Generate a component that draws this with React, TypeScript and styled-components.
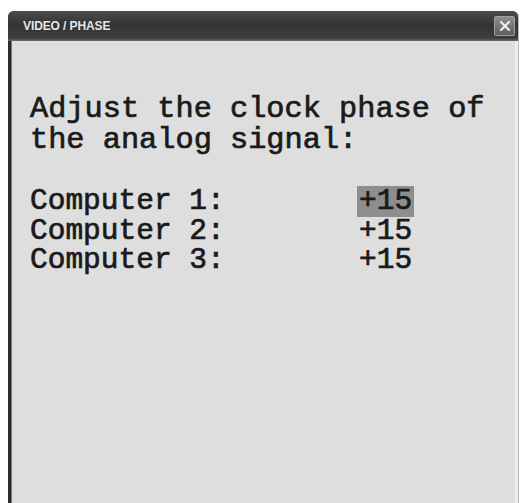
import styled, { createGlobalStyle } from "styled-components";

const GlobalStyle = createGlobalStyle`
  html, body {
    margin: 0;
    height: 100%;
    overflow: hidden;
    background: #ffffff;
  }
`;

const Window = styled.div`
  margin: 11px 2px 0 8px;
  height: 492px;
  display: flex;
  flex-direction: column;
  border-radius: 6px 6px 0 0;
  background: #2e2e2e;
  box-shadow: 1px 0 0 #bdbdbd;
`;

const TitleBar = styled.div`
  height: 30px;
  flex-shrink: 0;
  display: flex;
  align-items: center;
  justify-content: space-between;
  padding: 0 3px 0 15px;
  border-radius: 6px 6px 0 0;
  background: linear-gradient(#4c4c4c, #333 45%, #3d3d3d 90%, #6a6a6a);
`;

const Title = styled.span`
  font-family: "Liberation Sans", Arial, sans-serif;
  font-weight: bold;
  font-size: 12px;
  letter-spacing: -0.1px;
  color: #e6e6e6;
`;

const CloseButton = styled.div`
  width: 19px;
  height: 18px;
  display: flex;
  align-items: center;
  justify-content: center;
  border: 1px solid #a0a0a0;
  border-radius: 2px;
  background: linear-gradient(#8e8e8e, #5e5e5e);
`;

const Body = styled.div`
  flex: 1;
  margin-left: 3px;
  background: #dedede;
  border-left: 1px solid #777;
  border-right: 3px solid #ececec;
  padding: 53px 0 0 18px;
  font-family: "Liberation Mono", "Courier New", monospace;
  color: #1a1a1a;
  -webkit-text-stroke: 0.7px #1a1a1a;
  white-space: pre;
`;

const Heading = styled.div`
  font-size: 30.3px;
  line-height: 31px;
  margin-bottom: 30px;
`;

const Row = styled.div`
  display: flex;
  align-items: baseline;
  height: 29.5px;
  font-size: 29.5px;
  line-height: 29.5px;
`;

const Label = styled.span`
  width: 327px;
`;

const Value = styled.span<{ $selected?: boolean }>`
  padding: 0 2px;
  line-height: 31px;
  background: ${(p) => (p.$selected ? "#8e8e8e" : "transparent")};
`;

const computers = [
  { name: "Computer 1:", phase: "+15" },
  { name: "Computer 2:", phase: "+15" },
  { name: "Computer 3:", phase: "+15" },
];

export default function App() {
  return (
    <>
      <GlobalStyle />
      <Window>
        <TitleBar>
          <Title>VIDEO / PHASE</Title>
          <CloseButton>
            <svg width="12" height="12" viewBox="0 0 12 12">
              <path d="M2 2 L10 10 M10 2 L2 10" stroke="#f2f2f2" strokeWidth="2" strokeLinecap="round" />
            </svg>
          </CloseButton>
        </TitleBar>
        <Body>
          <Heading>
            {"Adjust the clock phase of\nthe analog signal:"}
          </Heading>
          {computers.map((c, i) => (
            <Row key={c.name}>
              <Label>{c.name}</Label>
              <Value $selected={i === 0}>{c.phase}</Value>
            </Row>
          ))}
        </Body>
      </Window>
    </>
  );
}
